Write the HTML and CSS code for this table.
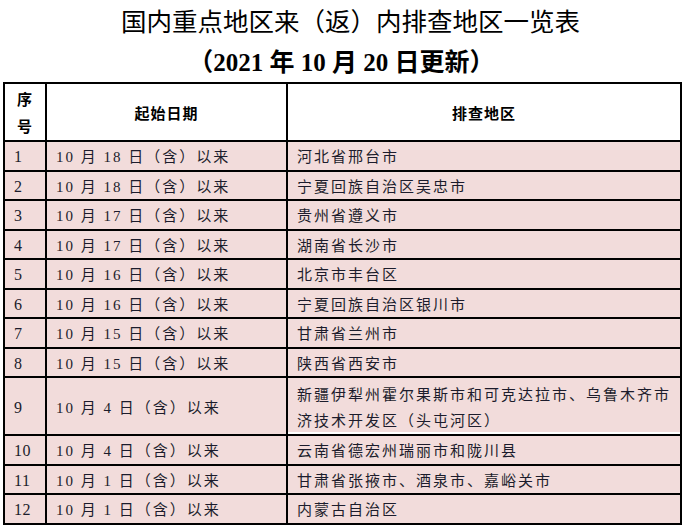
FILE: index.html
```html
<!DOCTYPE html>
<html lang="zh-CN">
<head>
<meta charset="utf-8">
<title>国内重点地区来（返）内排查地区一览表</title>
<link rel="stylesheet" href="styles.css">
</head>
<body>
<div class="page">
  <header class="heading">
    <h1 class="title">国内重点地区来（返）内排查地区一览表</h1>
    <p class="subtitle">（2021 年 10 月 20 日更新）</p>
  </header>
  <table class="list">
    <colgroup>
      <col class="c-no">
      <col class="c-date">
      <col class="c-area">
    </colgroup>
    <thead>
      <tr class="head-row">
        <th class="th-no">序<br>号</th>
        <th>起始日期</th>
        <th>排查地区</th>
      </tr>
    </thead>
    <tbody>
      <tr><td class="no">1</td><td>10 月 18 日（含）以来</td><td>河北省邢台市</td></tr>
      <tr><td class="no">2</td><td>10 月 18 日（含）以来</td><td>宁夏回族自治区吴忠市</td></tr>
      <tr><td class="no">3</td><td>10 月 17 日（含）以来</td><td>贵州省遵义市</td></tr>
      <tr><td class="no">4</td><td>10 月 17 日（含）以来</td><td>湖南省长沙市</td></tr>
      <tr><td class="no">5</td><td>10 月 16 日（含）以来</td><td>北京市丰台区</td></tr>
      <tr><td class="no">6</td><td>10 月 16 日（含）以来</td><td>宁夏回族自治区银川市</td></tr>
      <tr><td class="no">7</td><td>10 月 15 日（含）以来</td><td>甘肃省兰州市</td></tr>
      <tr><td class="no">8</td><td>10 月 15 日（含）以来</td><td>陕西省西安市</td></tr>
      <tr class="tall"><td class="no">9</td><td>10 月 4 日（含）以来</td><td class="multi"><div class="clip">新疆伊犁州霍尔果斯市和可克达拉市、乌鲁木齐市<br>济技术开发区（头屯河区）</div></td></tr>
      <tr><td class="no">10</td><td>10 月 4 日（含）以来</td><td>云南省德宏州瑞丽市和陇川县</td></tr>
      <tr><td class="no">11</td><td>10 月 1 日（含）以来</td><td>甘肃省张掖市、酒泉市、嘉峪关市</td></tr>
      <tr><td class="no">12</td><td>10 月 1 日（含）以来</td><td>内蒙古自治区</td></tr>
    </tbody>
  </table>
</div>
</body>
</html>
```

FILE: styles.css
```css
html, body {
  margin: 0;
  padding: 0;
  background: #ffffff;
}

.page {
  width: 683px;
  padding: 0 3px;
  box-sizing: border-box;
  font-family: "Liberation Serif", "Noto Sans CJK SC", serif;
  color: #1c1c2c;
}

.heading {
  text-align: center;
  color: #000;
}

.title {
  margin: 0;
  padding-left: 18px;
  height: 40px;
  line-height: 40px;
  font-size: 25.5px;
  font-weight: normal;
  font-family: "Noto Sans CJK SC", sans-serif;
  white-space: nowrap;
}

.subtitle {
  margin: 0;
  padding-top: 4px;
  height: 38px;
  line-height: 38px;
  font-size: 25px;
  font-weight: bold;
  font-family: "Liberation Serif", "Noto Sans CJK SC", serif;
  white-space: nowrap;
}

.list {
  width: 677px;
  border-collapse: collapse;
  table-layout: fixed;
  border: 2px solid #000;
}

.c-no { width: 42px; }
.c-date { width: 241px; }
.c-area { width: 394px; }

.list th,
.list td {
  border: 2px solid #000;
  padding: 0 0 0 9px;
  text-align: left;
  vertical-align: middle;
  font-size: 15px;
  letter-spacing: 2px;
  white-space: nowrap;
  overflow: hidden;
}

.list th {
  background: #ffffff;
  color: #000;
  font-weight: bold;
  text-align: center;
  padding: 0;
  font-family: "Noto Sans CJK SC", sans-serif;
  letter-spacing: 1px;
}

.head-row {
  height: 58px;
}

.th-no {
  line-height: 27px;
}

.list tbody tr {
  height: 29.5px;
  background: #f2dcdb;
}

.list tbody td {
  line-height: 20px;
  padding-top: 3px;
}

.list td.no {
  padding-left: 9px;
  letter-spacing: 0.5px;
  font-size: 16px;
}

.list tbody tr.tall {
  height: 58px;
}

.multi {
  box-shadow: inset 0 -2px 0 #ffffff;
}

.clip {
  line-height: 26px;
  overflow: hidden;
  white-space: nowrap;
}
```
